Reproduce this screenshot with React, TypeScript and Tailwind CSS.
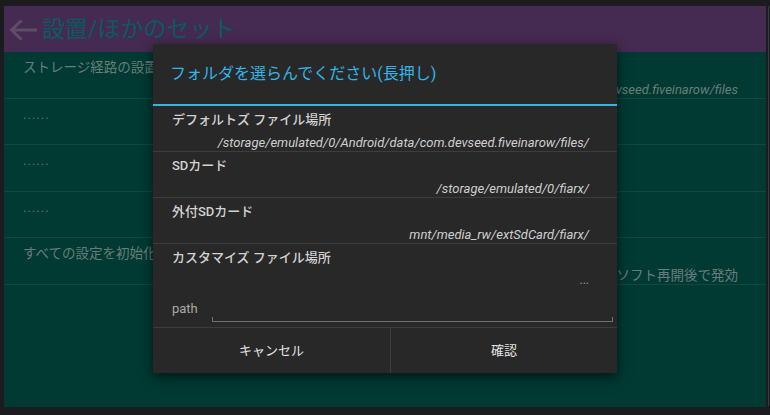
const font = { fontFamily: 'Roboto, "Noto Sans CJK JP", sans-serif' };

function BgRow({ title, sub, dots, italic }: { title?: string; sub?: string; dots?: boolean; italic?: boolean }) {
  return (
    <div className="relative h-[46.5px] border-b border-[#0d4a42] px-[19px]">
      {dots ? (
        <div className="pt-[6px] text-[13px] leading-[20px] tracking-[1px] text-[#5d7370]">......</div>
      ) : (
        <div className="pt-[5px] text-[13.5px] leading-[20px] text-[#6b7d79]">{title}</div>
      )}
      {sub && (
        <div
          className={
            italic
              ? 'absolute right-[28px] top-[28px] text-[13px] italic leading-[20px] text-[#6b7d79]'
              : 'absolute right-[28px] top-[27px] text-[13.5px] leading-[20px] text-[#6b7d79]'
          }
        >
          {sub}
        </div>
      )}
    </div>
  );
}

function DlgItem({ title, path }: { title: string; path: string }) {
  return (
    <div className="h-[46px] border-b border-[#3d3d3d] pl-[19px] pr-[28px]">
      <div className="pt-[4px] text-[13px] font-medium leading-[20px] text-[#d2d2d2]">{title}</div>
      <div className="pt-[5px] text-right text-[13px] italic leading-[16px] text-[#cfcfcf]">{path}</div>
    </div>
  );
}

export default function App() {
  return (
    <div style={font} className="relative h-[415px] w-[770px] overflow-hidden bg-[#1c1b20] pb-[8px] pl-[4px] pr-[4px] pt-[6px]">
      <div className="flex h-full flex-col">
        <header className="flex h-[46px] flex-none items-center bg-[#452a52] pl-[4px]">
          <svg width="30" height="24" viewBox="0 0 30 24" className="mr-[4px] mt-[1px]">
            <path d="M29 12H4M13.5 2.5L3.5 12L13.5 21.5" fill="none" stroke="#5f4d68" strokeWidth="3" />
          </svg>
          <span className="mt-[1px] text-[23px] leading-none text-[#0b5a62]">設置/ほかのセット</span>
        </header>
        <div className="flex-1 bg-[#003a33]">
          <BgRow title="ストレージ経路の設置" sub="/storage/emulated/0/Android/data/com.devseed.fiveinarow/files" italic />
          <BgRow dots />
          <BgRow dots />
          <BgRow dots />
          <BgRow title="すべての設定を初始化" sub="ソフト再開後で発効" />
        </div>
      </div>

      {/* folder picker dialog */}
      <div className="absolute left-[153px] top-[44px] w-[464px] bg-[#282828] shadow-[0_4px_12px_rgba(0,0,0,0.6)]">
        <div className="h-[60px] pl-[17px] pt-[19px] text-[16px] leading-[22px] text-[#33b5e5]">フォルダを選らんでください(長押し)</div>
        <div className="h-[2px] bg-[#33b5e5]" />
        <div>
          <DlgItem title="デフォルトズ ファイル場所" path="/storage/emulated/0/Android/data/com.devseed.fiveinarow/files/" />
          <DlgItem title="SDカード" path="/storage/emulated/0/fiarx/" />
          <DlgItem title="外付SDカード" path="mnt/media_rw/extSdCard/fiarx/" />
          <div className="h-[84px] border-b border-[#3d3d3d] pl-[19px] pr-[4px]">
            <div className="pt-[4px] text-[13px] font-medium leading-[20px] text-[#d2d2d2]">カスタマイズ ファイル場所</div>
            <div className="pr-[24px] pt-[5px] text-right text-[12px] leading-[14px] text-[#9a9a9a]">...</div>
            <div className="flex h-[40px] items-start">
              <span className="mt-[12px] w-[40px] text-[13px] leading-[20px] text-[#a8a8a8]">path</span>
              <div className="mt-[30px] h-[5px] flex-1 border-x border-b border-[#707070]" />
            </div>
          </div>
          <div className="flex h-[45px] text-[13px] text-[#e2e2e2]">
            <button className="flex w-[238px] items-center justify-center border-r border-[#3d3d3d]">キャンセル</button>
            <button className="flex flex-1 items-center justify-center">確認</button>
          </div>
        </div>
      </div>
      <div className="absolute right-[1px] top-[6px] h-[400px] w-[1px] bg-[#3a3f46]" />
    </div>
  );
}
